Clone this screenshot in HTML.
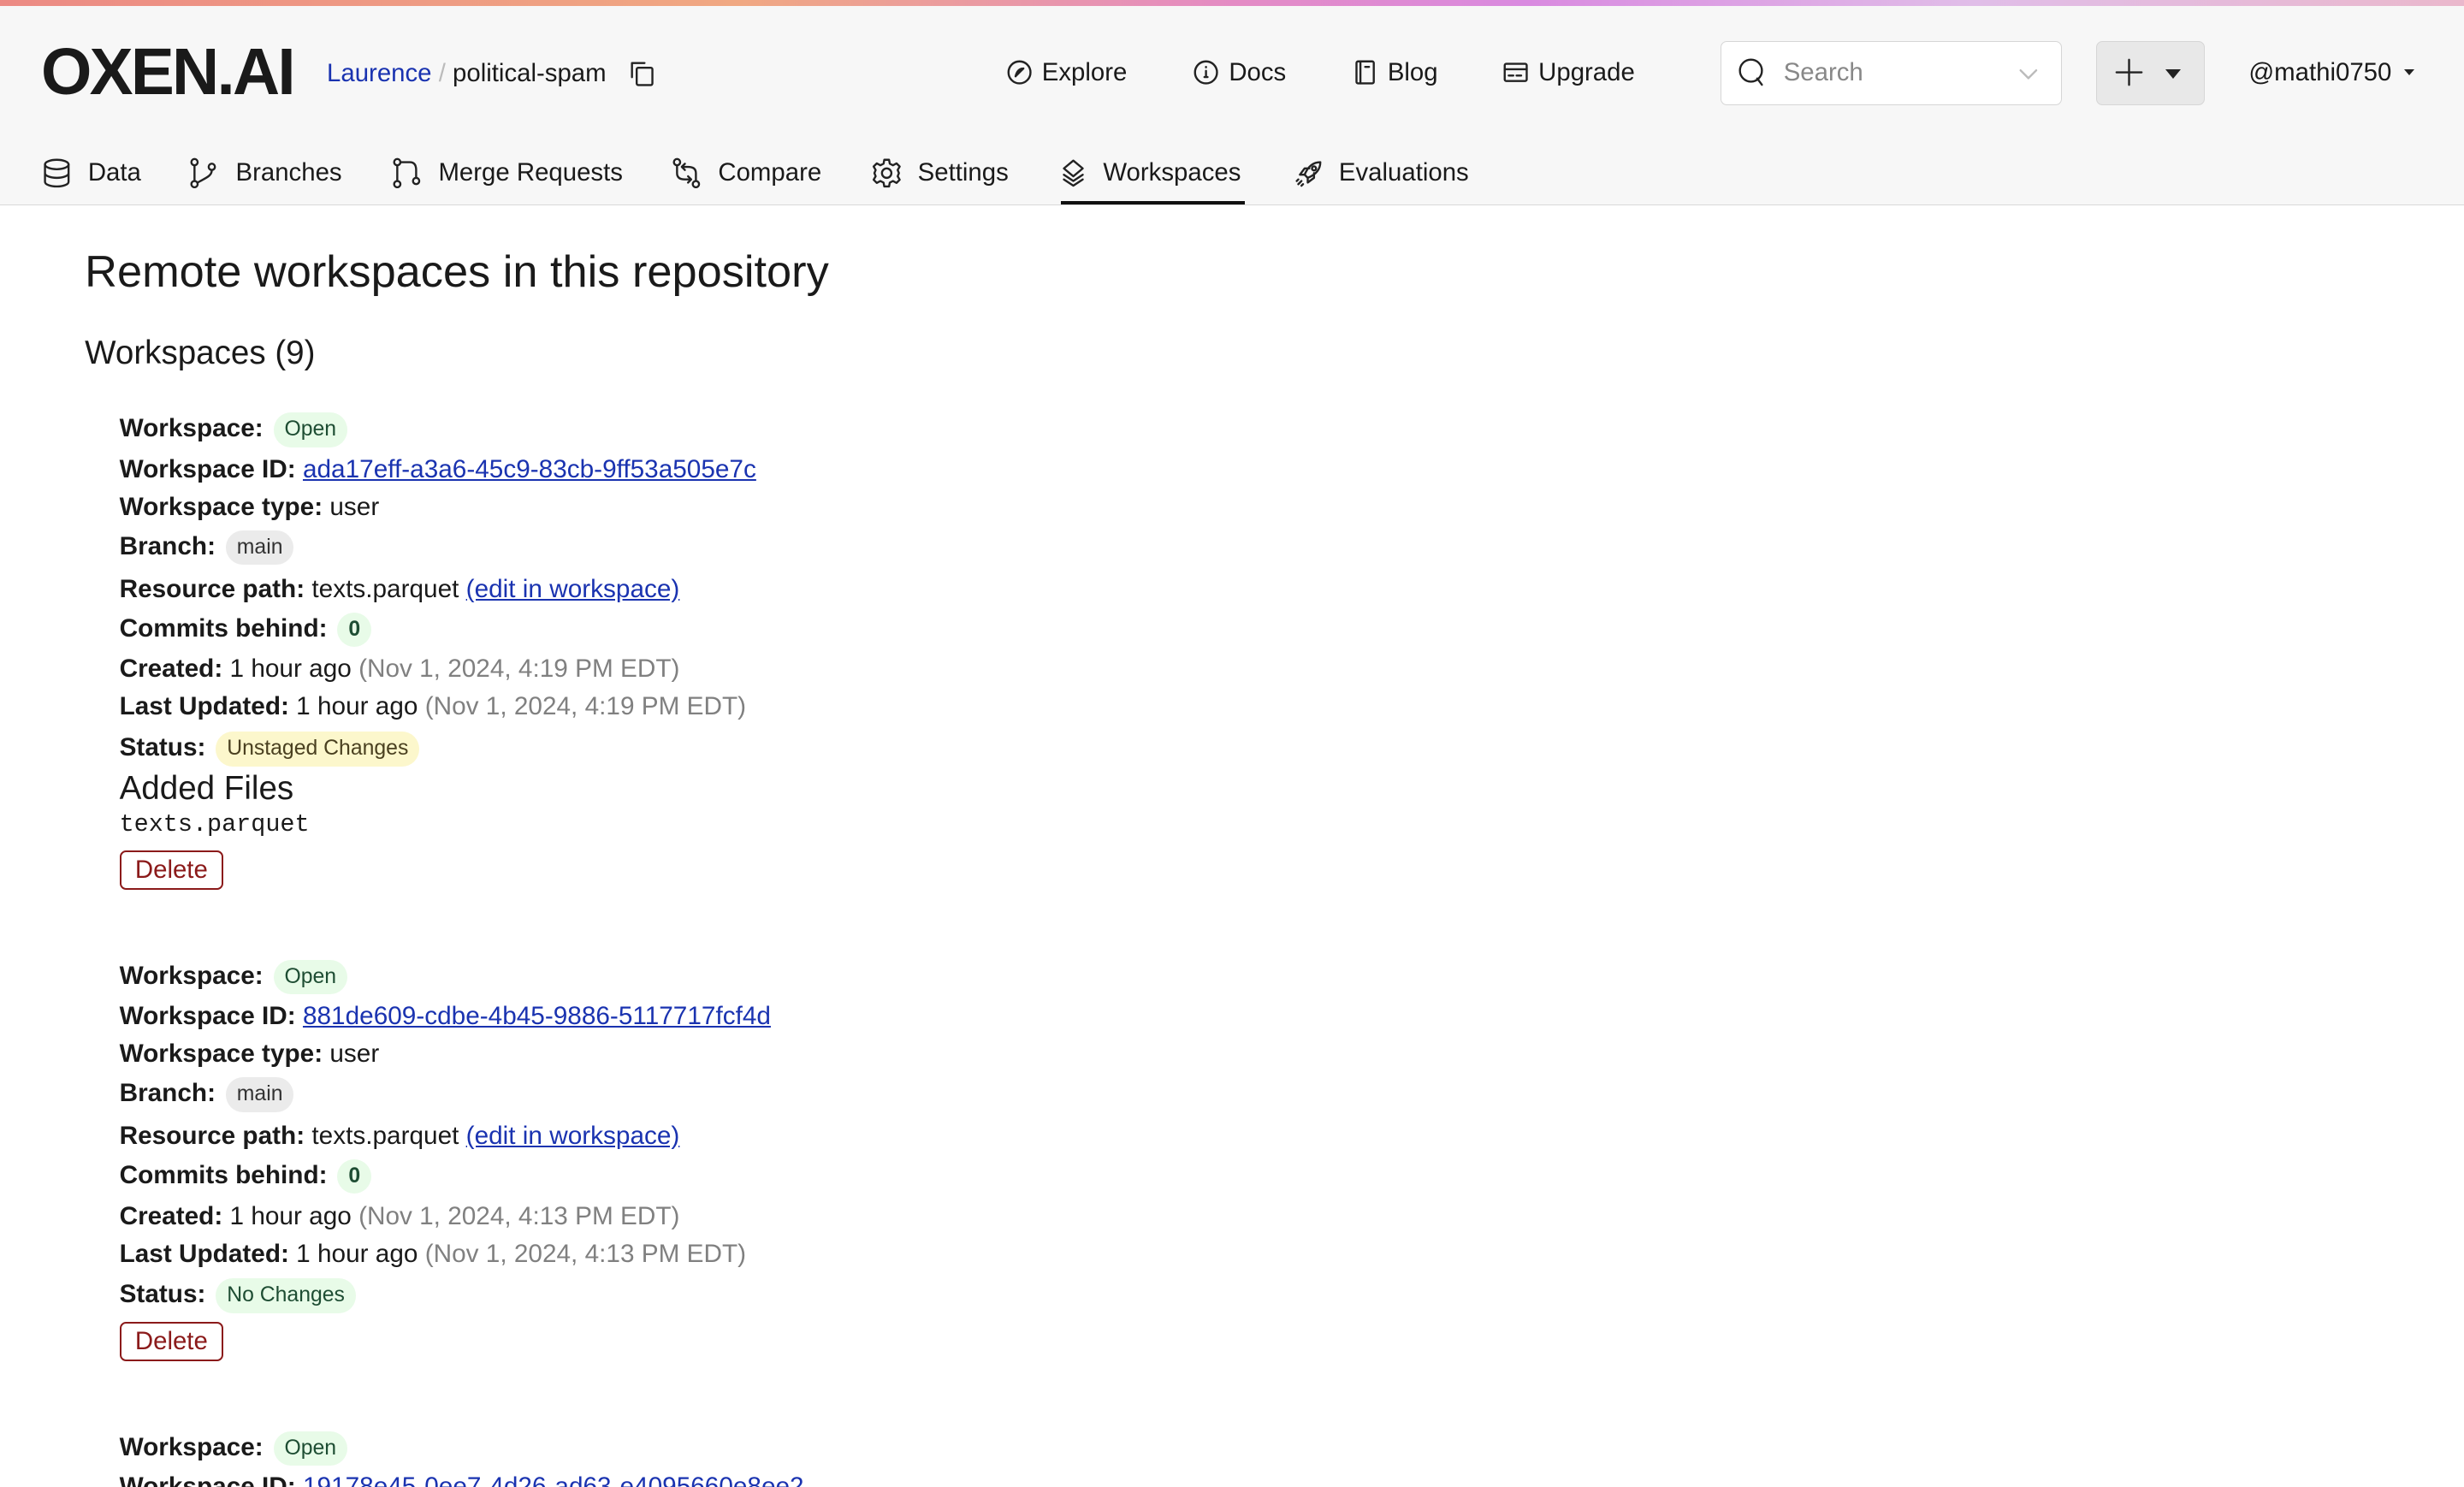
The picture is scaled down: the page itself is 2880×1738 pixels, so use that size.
<!DOCTYPE html>
<html><head><meta charset="utf-8"><style>
html,body{margin:0;padding:0;background:#fff;overflow:hidden}
#w{width:1568px;height:946px;zoom:1.836735;position:relative;font-family:"Liberation Sans",sans-serif;color:#1a1a1a;overflow:hidden}
.hdr{position:absolute;left:0;top:0;width:1568px;height:130px;background:#f7f7f7;border-bottom:1px solid #d9d9d9}
.bar{position:absolute;left:0;top:0;width:1568px;height:4px;background:linear-gradient(90deg,#ec8a84,#f0a882 30%,#e48bc4 50%,#d98ae0 62%,#e0bde8 80%,#eab8cc)}
.a{position:absolute;white-space:nowrap}
.nav{font-size:16px;display:flex;align-items:center;gap:6px}
svg{fill:none;stroke:#222;stroke-width:1.3;stroke-linecap:round;stroke-linejoin:round}
.ln{position:absolute;left:76px;height:24px;line-height:24px;font-size:16.2px;white-space:nowrap}
b{font-weight:bold}
.lk{color:#1a33b0;text-decoration:underline}
.gr{color:#808080}
.pill{display:inline-block;padding:0 7px;height:22px;line-height:22px;border-radius:11px;font-size:13.5px;vertical-align:middle;margin-left:2px}
.g{background:#e8fbe8;color:#1e4d33}
.n{background:#ebebeb;color:#333}
.y{background:#fcf7cc;color:#4a4020}
.del{position:absolute;left:76px;width:64px;height:23px;border:1.5px solid #8b1a1a;border-radius:4px;color:#8b1a1a;font-size:16px;text-align:center;line-height:23px}
</style></head><body><div id="w">
<div class="hdr"></div><div class="bar"></div>
<div class="a" style="left:26px;top:22px;font-size:42px;font-weight:bold;letter-spacing:-1.5px;line-height:48px;transform:scaleX(0.99);transform-origin:left">OXEN.AI</div>
<div class="a" style="left:208px;top:37px;font-size:16px;line-height:20px"><span style="color:#1a33b0">Laurence</span> <span style="color:#bbb">/</span> political-spam</div>
<svg class="a" style="left:400px;top:38px" width="17" height="17" viewBox="0 0 17 17"><path d="M2 11V2h8"/><rect x="5" y="5" width="10" height="11" rx="1"/></svg>
<div class="a nav" style="left:640px;top:37px"><svg width="17" height="17" viewBox="0 0 17 17"><circle cx="8.5" cy="8.5" r="7"/><path d="M11 6L6 11M11 6C9 6 7 7 6 11"/></svg>Explore</div>
<div class="a nav" style="left:759px;top:37px"><svg width="17" height="17" viewBox="0 0 17 17"><circle cx="8.5" cy="8.5" r="7"/><path d="M8.5 7.5v4M8.5 5v.3M7.5 11.5h2"/></svg>Docs</div>
<div class="a nav" style="left:860px;top:37px"><svg width="17" height="17" viewBox="0 0 17 17"><rect x="3" y="1.5" width="11" height="14" rx="1"/><path d="M5.5 1.5v14M8.5 5h2.5"/></svg>Blog</div>
<div class="a nav" style="left:956px;top:37px"><svg width="17" height="17" viewBox="0 0 17 17"><rect x="1.5" y="3" width="14" height="11" rx="1"/><path d="M1.5 6.5h14M4 10.5h3M9 10.5h3"/></svg>Upgrade</div>
<div class="a" style="left:1095px;top:26px;width:216px;height:40px;background:#fff;border:1px solid #d6d6d6;border-radius:4px"></div>
<svg class="a" style="left:1105px;top:36px" width="20" height="20" viewBox="0 0 20 20"><circle cx="9" cy="9" r="7"/><path d="M13 14l3 4"/></svg>
<div class="a" style="left:1135px;top:37px;font-size:16px;color:#888">Search</div>
<svg class="a" style="left:1284px;top:40px;stroke:#bbb" width="14" height="14" viewBox="0 0 14 14"><path d="M2 5l5 5 5-5"/></svg>
<div class="a" style="left:1334px;top:26px;width:68px;height:40px;background:#e8e8e8;border:1px solid #d6d6d6;border-radius:4px"></div>
<svg class="a" style="left:1346px;top:37px" width="18" height="18" viewBox="0 0 18 18"><path d="M9 1v16M1 9h16"/></svg>
<div class="a" style="left:1378px;top:44px;width:0;height:0;border-left:5px solid transparent;border-right:5px solid transparent;border-top:6px solid #222"></div>
<div class="a" style="left:1431px;top:37px;font-size:16px">@mathi0750</div>
<div class="a" style="left:1530px;top:44px;width:0;height:0;border-left:3.5px solid transparent;border-right:3.5px solid transparent;border-top:4px solid #222"></div>

<div class="a nav" style="left:26px;top:100px"><svg width="20" height="20" viewBox="0 0 20 20"><ellipse cx="10" cy="4.5" rx="7.5" ry="3"/><path d="M2.5 4.5v11c0 1.7 3.4 3 7.5 3s7.5-1.3 7.5-3v-11M2.5 10c0 1.7 3.4 3 7.5 3s7.5-1.3 7.5-3"/></svg><span style="margin-left:4px">Data</span></div>
<div class="a nav" style="left:120px;top:100px"><svg width="20" height="20" viewBox="0 0 20 20"><circle cx="4" cy="3" r="2"/><circle cx="4" cy="17" r="2"/><circle cx="15" cy="6" r="2"/><path d="M4 5v10M15 8c0 4-4 5-9 8"/></svg><span style="margin-left:4px">Branches</span></div>
<div class="a nav" style="left:249px;top:100px"><svg width="20" height="20" viewBox="0 0 20 20"><circle cx="4" cy="3" r="2"/><circle cx="4" cy="17" r="2"/><circle cx="16" cy="15" r="2"/><path d="M4 5v10M6 3h6c3 0 4 2 4 5v5"/></svg><span style="margin-left:4px">Merge Requests</span></div>
<div class="a nav" style="left:427px;top:100px"><svg width="20" height="20" viewBox="0 0 20 20"><circle cx="4" cy="3" r="2"/><circle cx="16" cy="17" r="2"/><path d="M4 5v5c0 3 2 4 5 4h4M11 12l2 2-2 2M16 15v-5c0-3-2-4-5-4H7M9 8L7 6l2-2"/></svg><span style="margin-left:4px">Compare</span></div>
<div class="a nav" style="left:554px;top:100px"><svg width="20" height="20" viewBox="0 0 20 20"><circle cx="10" cy="10" r="3"/><path d="M8.5 1.5h3l.5 2.5 2 1 2.3-1.2 2 2L17 8l.8 2-.8 2 1.3 2.2-2 2L14 15l-2 1-.5 2.5h-3L8 16l-2-1-2.3 1.2-2-2L3 12l-.8-2L3 8 1.7 5.8l2-2L6 5l2-1z"/></svg><span style="margin-left:4px">Settings</span></div>
<div class="a nav" style="left:674px;top:100px"><svg width="18" height="20" viewBox="0 0 18 20"><path d="M9 2l6 5-6 5-6-5zM3 11l6 4 6-4M3 14l6 4 6-4"/></svg><span style="margin-left:4px">Workspaces</span></div>
<div class="a" style="left:675px;top:128px;width:117px;height:2px;background:#111"></div>
<div class="a nav" style="left:823px;top:100px"><svg width="20" height="20" viewBox="0 0 20 20"><path d="M17 3c-5 0-8 3-10 8l2 2c5-2 8-5 8-10zM7 11H4l3-4h3M9 13v3l4-3v-3M3 17l2-2M5 18l1-1M2 15l1-1"/><circle cx="13" cy="7" r="1.3"/></svg><span style="margin-left:3px">Evaluations</span></div>

<div class="a" style="left:54px;top:156px;font-size:28.5px;line-height:34px">Remote workspaces in this repository</div>
<div class="a" style="left:54px;top:212px;font-size:21px;line-height:26px">Workspaces (9)</div>

<div class="ln" style="top:261px"><b>Workspace:</b> <span class="pill g">Open</span></div>
<div class="ln" style="top:287px"><b>Workspace ID:</b> <span class="lk">ada17eff-a3a6-45c9-83cb-9ff53a505e7c</span></div>
<div class="ln" style="top:311px"><b>Workspace type:</b> user</div>
<div class="ln" style="top:336px"><b>Branch:</b> <span class="pill n">main</span></div>
<div class="ln" style="top:363px"><b>Resource path:</b> texts.parquet <span class="lk">(edit in workspace)</span></div>
<div class="ln" style="top:388px"><b>Commits behind:</b> <span class="pill g" style="font-weight:bold">0</span></div>
<div class="ln" style="top:414px"><b>Created:</b> 1 hour ago <span class="gr">(Nov 1, 2024, 4:19 PM EDT)</span></div>
<div class="ln" style="top:438px"><b>Last Updated:</b> 1 hour ago <span class="gr">(Nov 1, 2024, 4:19 PM EDT)</span></div>
<div class="ln" style="top:464px"><b>Status:</b> <span class="pill y">Unstaged Changes</span></div>
<div class="ln" style="top:489px;font-size:21px;height:26px;line-height:26px">Added Files</div>
<div class="ln" style="top:513px;font-family:'Liberation Mono',monospace;font-size:15.5px">texts.parquet</div>
<div class="del" style="top:541px">Delete</div>

<div class="ln" style="top:609px"><b>Workspace:</b> <span class="pill g">Open</span></div>
<div class="ln" style="top:635px"><b>Workspace ID:</b> <span class="lk">881de609-cdbe-4b45-9886-5117717fcf4d</span></div>
<div class="ln" style="top:659px"><b>Workspace type:</b> user</div>
<div class="ln" style="top:684px"><b>Branch:</b> <span class="pill n">main</span></div>
<div class="ln" style="top:711px"><b>Resource path:</b> texts.parquet <span class="lk">(edit in workspace)</span></div>
<div class="ln" style="top:736px"><b>Commits behind:</b> <span class="pill g" style="font-weight:bold">0</span></div>
<div class="ln" style="top:762px"><b>Created:</b> 1 hour ago <span class="gr">(Nov 1, 2024, 4:13 PM EDT)</span></div>
<div class="ln" style="top:786px"><b>Last Updated:</b> 1 hour ago <span class="gr">(Nov 1, 2024, 4:13 PM EDT)</span></div>
<div class="ln" style="top:812px"><b>Status:</b> <span class="pill g">No Changes</span></div>
<div class="del" style="top:841px">Delete</div>

<div class="ln" style="top:909px"><b>Workspace:</b> <span class="pill g">Open</span></div>
<div class="ln" style="top:934px"><b>Workspace ID:</b> <span class="lk">19178e45-0ee7-4d26-ad63-e4095660e8ee2</span></div>
</div></body></html>
